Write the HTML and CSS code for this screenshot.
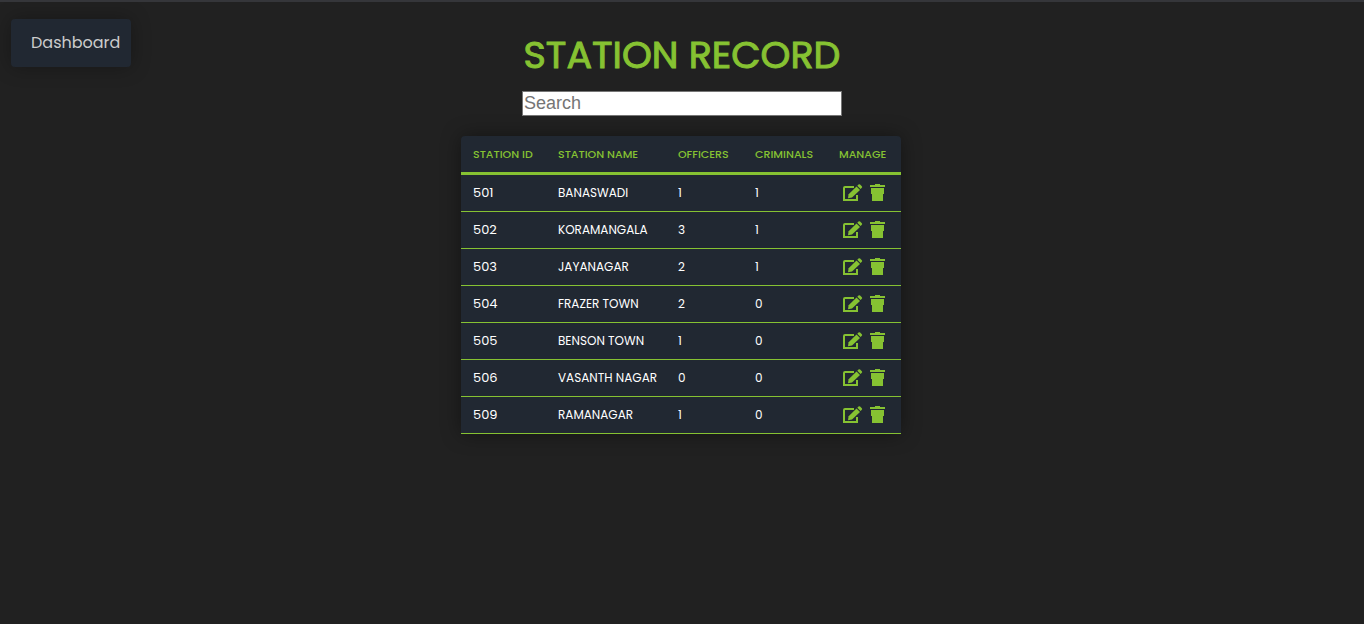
FILE: index.html
```
<!DOCTYPE html>
<html lang="en">
<head>
<meta charset="utf-8">
<meta name="viewport" content="width=device-width, initial-scale=1">
<title>Station Record</title>
<link rel="stylesheet" href="styles.css">
</head>
<body>
<svg class="sprite" aria-hidden="true">
  <symbol id="edit" viewBox="0 0 20 18">
    <path d="M11 3H2q-1 0-1 1v12h13v-5" fill="none" stroke="currentColor" stroke-width="2"/>
    <path d="M13.500 2.500l3.500 3.500-8 7.500-4 .800.600-4z"/>
    <path d="M14.300 1.800l1.200-1.300q.800-.700 1.600 0l1.700 1.700q.700.800 0 1.600l-1.200 1.200z"/>
  </symbol>
  <symbol id="trash" viewBox="0 0 16 18">
    <path d="M0 1h5V0h5v1h5v2H0zM1 4h13v6h-1v7H2v-7H1z"/>
  </symbol>
</svg>
<header class="page-header">
  <nav class="nav"><a class="nav-link" href="#">Dashboard</a></nav>
  <div class="intro">
    <h1 class="title">STATION RECORD</h1>
    <input class="search" type="text" placeholder="Search" aria-label="Search">
  </div>
</header>
<main class="content">
  <table class="records">
    <colgroup><col class="col-id"><col class="col-name"><col class="col-officers"><col class="col-criminals"><col class="col-manage"></colgroup>
    <thead>
      <tr><th scope="col">STATION ID</th><th scope="col">STATION NAME</th><th scope="col">OFFICERS</th><th scope="col">CRIMINALS</th><th scope="col">MANAGE</th></tr>
    </thead>
    <tbody>
      <tr><td class="id">501</td><td>BANASWADI</td><td>1</td><td>1</td><td><div class="actions"><button class="action" aria-label="Edit 501"><svg class="edit"><use href="#edit"/></svg></button><button class="action" aria-label="Delete 501"><svg class="trash"><use href="#trash"/></svg></button></div></td></tr>
      <tr><td class="id">502</td><td>KORAMANGALA</td><td>3</td><td>1</td><td><div class="actions"><button class="action" aria-label="Edit 502"><svg class="edit"><use href="#edit"/></svg></button><button class="action" aria-label="Delete 502"><svg class="trash"><use href="#trash"/></svg></button></div></td></tr>
      <tr><td class="id">503</td><td>JAYANAGAR</td><td>2</td><td>1</td><td><div class="actions"><button class="action" aria-label="Edit 503"><svg class="edit"><use href="#edit"/></svg></button><button class="action" aria-label="Delete 503"><svg class="trash"><use href="#trash"/></svg></button></div></td></tr>
      <tr><td class="id">504</td><td>FRAZER TOWN</td><td>2</td><td>0</td><td><div class="actions"><button class="action" aria-label="Edit 504"><svg class="edit"><use href="#edit"/></svg></button><button class="action" aria-label="Delete 504"><svg class="trash"><use href="#trash"/></svg></button></div></td></tr>
      <tr><td class="id">505</td><td>BENSON TOWN</td><td>1</td><td>0</td><td><div class="actions"><button class="action" aria-label="Edit 505"><svg class="edit"><use href="#edit"/></svg></button><button class="action" aria-label="Delete 505"><svg class="trash"><use href="#trash"/></svg></button></div></td></tr>
      <tr><td class="id">506</td><td>VASANTH NAGAR</td><td>0</td><td>0</td><td><div class="actions"><button class="action" aria-label="Edit 506"><svg class="edit"><use href="#edit"/></svg></button><button class="action" aria-label="Delete 506"><svg class="trash"><use href="#trash"/></svg></button></div></td></tr>
      <tr><td class="id">509</td><td>RAMANAGAR</td><td>1</td><td>0</td><td><div class="actions"><button class="action" aria-label="Edit 509"><svg class="edit"><use href="#edit"/></svg></button><button class="action" aria-label="Delete 509"><svg class="trash"><use href="#trash"/></svg></button></div></td></tr>
    </tbody>
  </table>
</main>
</body>
</html>
```
FILE: styles.css
```
* { box-sizing: border-box; }
body {
  margin: 0;
  min-height: 100vh;
  border-top: 2px solid #35363a;
  background: #212121;
  color: #fff;
  font-family: Poppins, Inter, sans-serif;
}
.sprite { display: none; }
.page-header {
  display: grid;
  grid-template-columns: 1fr auto 1fr;
  align-items: start;
}
.nav { padding: 17px 11px 0; }
.nav-link {
  display: inline-block;
  padding: 12px 11px 12px 20px;
  border-radius: 4px;
  background: #212832;
  box-shadow: 0 0 20px rgba(0, 0, 0, 0.3);
  color: #ccc;
  font-size: 16px;
  line-height: 24px;
  text-decoration: none;
}
.intro {
  display: flex;
  flex-direction: column;
  align-items: center;
  padding-top: 29px;
}
.title {
  margin: 0 0 12px;
  color: #86c232;
  font-size: 38px;
  font-weight: 400;
  line-height: 48px;
  -webkit-text-stroke: 1px #86c232;
}
.search {
  width: 320px;
  height: 25px;
  padding: 1px;
  border: 1px solid #767676;
  border-radius: 0;
  background: #fff;
  color: #000;
  font-family: "Liberation Sans", Arial, sans-serif;
  font-size: 18px;
}
.search::placeholder { color: #757575; }
.content {
  display: flex;
  justify-content: center;
  padding: 20px 2px 20px 0;
}
.records {
  border-collapse: separate;
  border-spacing: 0;
  border-radius: 4px 4px 0 0;
  background: #212832;
  box-shadow: 0 0 20px rgba(0, 0, 0, 0.4);
  font-size: 12px;
}
.col-id { width: 85px; }
.col-name { width: 120px; }
.col-officers { width: 77px; }
.col-criminals { width: 84px; }
.col-manage { width: 74px; }
th, td {
  padding: 8px 8px 8px 12px;
  line-height: 20px;
  text-align: left;
  white-space: nowrap;
}
th {
  border-bottom: 3px solid #86c232;
  color: #86c232;
  font-size: 11px;
  font-weight: 500;
}
td { border-bottom: 1px solid #86c232; }
.id { font-size: 13px; }
.actions {
  display: flex;
  align-items: center;
  gap: 7px;
  padding-left: 4px;
}
.action {
  display: flex;
  padding: 0;
  border: 0;
  background: none;
  color: #86c232;
  cursor: pointer;
}
.edit { width: 20px; height: 18px; fill: currentColor; }
.trash { width: 16px; height: 18px; fill: currentColor; }
```
